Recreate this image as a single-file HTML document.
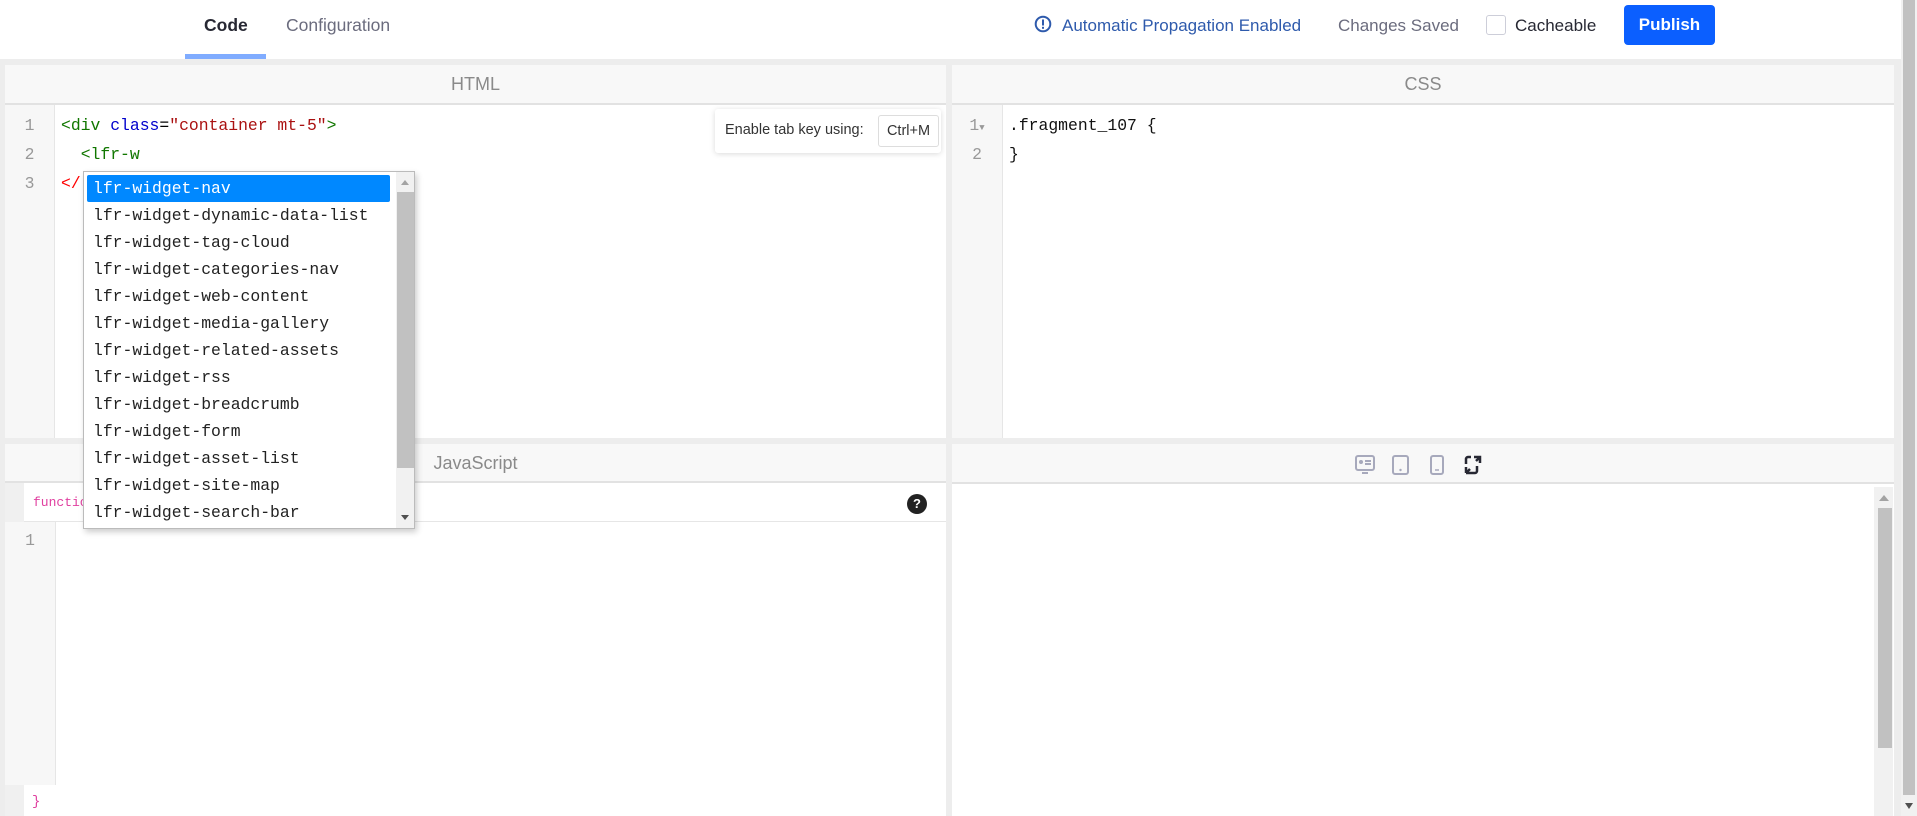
<!DOCTYPE html>
<html><head><meta charset="utf-8">
<style>
*{box-sizing:border-box;margin:0;padding:0}
body{width:1917px;height:816px;overflow:hidden;background:#ededed;font-family:"Liberation Sans",sans-serif;position:relative}
.abs{position:absolute}
.mono{font-family:"Liberation Mono",monospace;font-size:16.4px}
.top{left:0;top:0;width:1901px;height:59px;background:#fff}
.hdr{background:#f8f8f8;border-bottom:2px solid #e2e2e2;color:#8a8a8a;font-size:18px;text-align:center}
.gut{background:#f7f7f7;border-right:1px solid #e6e6e6;color:#999}
.ln{position:absolute;left:0;width:100%;text-align:center}
.item{height:27px;line-height:27px;padding-left:6px;color:#222}
</style></head><body>
<div class="abs top">
  <div class="abs" style="left:204px;top:15px;font-size:17.5px;color:#272833;font-weight:bold">Code</div>
  <div class="abs" style="left:185px;top:54px;width:81px;height:5px;background:#80acff"></div>
  <div class="abs" style="left:286px;top:15px;font-size:17.5px;color:#6b6c7e">Configuration</div>
  <svg class="abs" style="left:1034px;top:15px" width="18" height="18" viewBox="0 0 18 18"><circle cx="9" cy="9" r="7.3" fill="none" stroke="#2e5aac" stroke-width="2"/><rect x="8" y="4.5" width="2" height="6" fill="#2e5aac"/><rect x="8" y="11.8" width="2" height="2" fill="#2e5aac"/></svg>
  <div class="abs" style="left:1062px;top:16px;font-size:17px;color:#2e5aac">Automatic Propagation Enabled</div>
  <div class="abs" style="left:1338px;top:16px;font-size:17px;color:#6b6c7e">Changes Saved</div>
  <div class="abs" style="left:1486px;top:15px;width:20px;height:20px;border:1px solid #cdced9;border-radius:3px;background:#fff"></div>
  <div class="abs" style="left:1515px;top:16px;font-size:17px;color:#272833">Cacheable</div>
  <div class="abs" style="left:1624px;top:5px;width:91px;height:40px;background:#0b5fff;border-radius:4px;color:#fff;font-weight:bold;font-size:17px;text-align:center;line-height:40px">Publish</div>
</div>
<div class="abs" style="left:1901px;top:0;width:16px;height:816px;background:#f1f1f1"></div>
<div class="abs" style="left:1903px;top:0;width:12px;height:795px;background:#c1c1c1"></div>
<div class="abs" style="left:1905px;top:803px;width:0;height:0;border-left:4px solid transparent;border-right:4px solid transparent;border-top:6px solid #505050"></div>

<div class="abs" style="left:5px;top:65px;width:941px;height:373px;background:#fff">
  <div class="hdr" style="height:40px;line-height:38px">HTML</div>
  <div class="abs gut mono" style="left:0;top:40px;width:50px;height:333px">
    <div class="ln" style="top:6px;line-height:29px">1</div><div class="ln" style="top:35px;line-height:29px">2</div><div class="ln" style="top:64px;line-height:29px">3</div>
  </div>
  <div class="abs mono" style="left:56px;top:46px;line-height:29px;white-space:pre"><span style="color:#170">&lt;div</span> <span style="color:#00c">class</span>=<span style="color:#a11">"container mt-5"</span><span style="color:#170">&gt;</span>
  <span style="color:#170">&lt;lfr-w</span>
<span style="color:#f00">&lt;/</span></div>
  <div class="abs" style="left:710px;top:44px;width:226px;height:44px;background:#fff;box-shadow:0 1px 6px rgba(0,0,0,.15);border-radius:3px;font-size:14.5px;color:#333">
    <span class="abs" style="left:10px;top:13px">Enable tab key using:</span>
    <span class="abs" style="left:163px;top:6px;width:61px;height:32px;border:1px solid #ddd;border-radius:3px;line-height:30px;text-align:center">Ctrl+M</span>
  </div>
</div>
<div class="abs" style="left:952px;top:65px;width:942px;height:373px;background:#fff">
  <div class="hdr" style="height:40px;line-height:38px">CSS</div>
  <div class="abs gut mono" style="left:0;top:40px;width:51px;height:333px">
    <div class="ln" style="top:6px;line-height:29px">1<span style="font-size:9px">▼</span></div><div class="ln" style="top:35px;line-height:29px">2</div>
  </div>
  <div class="abs mono" style="left:57px;top:46px;line-height:29px;white-space:pre;color:#111">.fragment_107 {
}</div>
</div>
<div class="abs" style="left:5px;top:444px;width:941px;height:372px;background:#fff">
  <div class="hdr" style="height:39px;line-height:39px">JavaScript</div>
  <div class="abs" style="left:0;top:39px;width:19px;height:333px;background:#f0f0f0"></div>
  <div class="abs" style="left:19px;top:41px;width:922px;height:37px;border-bottom:1px solid #e6e6e6;background:#fff">
    <span class="abs mono" style="left:9px;top:10px;font-size:13px;color:#e040a0">function</span>
    <span class="abs" style="left:883px;top:9px;width:20px;height:20px;border-radius:50%;background:#222;color:#fff;font-size:13px;font-weight:bold;text-align:center;line-height:20px">?</span>
  </div>
  <div class="abs gut mono" style="left:0;top:78px;width:51px;height:263px"><div class="ln" style="top:4px;line-height:29px">1</div></div>
  <div class="abs mono" style="left:27px;top:350px;color:#e040a0;font-size:14px">}</div>
</div>
<div class="abs" style="left:952px;top:444px;width:942px;height:372px;background:#fff">
  <div class="hdr" style="height:40px"></div>
  <svg class="abs" style="left:402px;top:10px" width="130" height="22" viewBox="0 0 130 22">
    <g fill="none" stroke="#a7a9bc" stroke-width="2"><rect x="2" y="2" width="18" height="14" rx="2"/><rect x="39" y="2" width="15" height="18" rx="2"/><rect x="77" y="2" width="12" height="18" rx="2"/></g>
    <circle cx="7" cy="8" r="2" fill="#a7a9bc"/><path d="M11 7h6M11 10h6M8 19h6" stroke="#a7a9bc" stroke-width="2"/>
    <circle cx="46.5" cy="16" r="1.2" fill="#a7a9bc"/><path d="M81 16h4" stroke="#a7a9bc" stroke-width="1.5"/>
    <path d="M117 3h-3a2 2 0 0 0-2 2v5M118 19h3a2 2 0 0 0 2-2v-5M120 3h6v6M126 3l-4 4M112 19h6M112 19v-6M112 19l4-4" fill="none" stroke="#272833" stroke-width="2.5"/>
  </svg>
  <div class="abs" style="left:922px;top:43px;width:19px;height:329px;background:#f1f1f1"></div>
  <div class="abs" style="left:926px;top:64px;width:14px;height:240px;background:#c1c1c1"></div>
  <div class="abs" style="left:927px;top:51px;border-left:5px solid transparent;border-right:5px solid transparent;border-bottom:6px solid #a3a3a3"></div>
</div>
<div class="abs mono" style="left:83px;top:171px;width:332px;height:358px;background:#fff;border:1px solid #bbb;box-shadow:2px 3px 6px rgba(0,0,0,.2);overflow:hidden">
  <div style="position:absolute;left:3px;top:3px;width:303px">
    <div class="item" style="background:#0088ff;color:#fff;border-radius:2px">lfr-widget-nav</div>
    <div class="item">lfr-widget-dynamic-data-list</div>
    <div class="item">lfr-widget-tag-cloud</div>
    <div class="item">lfr-widget-categories-nav</div>
    <div class="item">lfr-widget-web-content</div>
    <div class="item">lfr-widget-media-gallery</div>
    <div class="item">lfr-widget-related-assets</div>
    <div class="item">lfr-widget-rss</div>
    <div class="item">lfr-widget-breadcrumb</div>
    <div class="item">lfr-widget-form</div>
    <div class="item">lfr-widget-asset-list</div>
    <div class="item">lfr-widget-site-map</div>
    <div class="item">lfr-widget-search-bar</div>
  </div>
  <div class="abs" style="left:312px;top:0;width:19px;height:356px;background:#f1f1f1"></div>
  <div class="abs" style="left:313px;top:20px;width:17px;height:276px;background:#c1c1c1"></div>
  <div class="abs" style="left:317px;top:8px;border-left:4px solid transparent;border-right:4px solid transparent;border-bottom:5px solid #a3a3a3"></div>
  <div class="abs" style="left:317px;top:343px;border-left:4px solid transparent;border-right:4px solid transparent;border-top:5px solid #505050"></div>
</div>
</body></html>
